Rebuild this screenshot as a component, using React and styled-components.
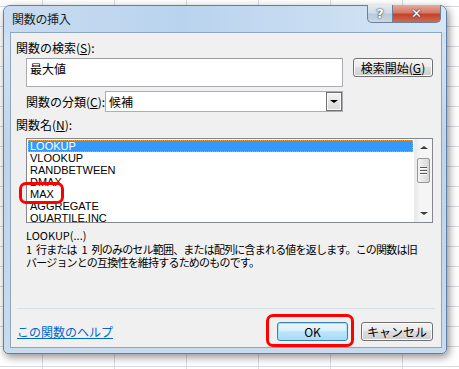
import React from 'react';
import styled, { createGlobalStyle } from 'styled-components';

const GlobalStyle = createGlobalStyle`
  html, body {
    margin: 0;
    padding: 0;
    width: 459px;
    height: 369px;
    overflow: hidden;
    background-color: #ffffff;
    background-image:
      linear-gradient(to right, #d6d9de 1px, transparent 1px),
      linear-gradient(to bottom, #d6d9de 1px, transparent 1px);
    background-size: 72px 20px;
    background-position: 42px 0, 0 6px;
    font-family: "Noto Sans CJK JP", "Liberation Sans", sans-serif;
  }
`;

const Window = styled.div`
  position: relative;
  width: 444px;
  height: 349px;
  margin: 5px 0 0 3px;
  box-sizing: border-box;
  border: 1px solid #5f7fa6;
  border-radius: 7px 7px 5px 5px;
  background: linear-gradient(to bottom, #c3d8ee 0%, #d3e3f4 12%, #bfd4ea 40%, #c8dbef 100%);
  box-shadow: 2px 3px 9px rgba(0, 0, 0, 0.45);
  display: flex;
  flex-direction: column;
`;

const TitleBar = styled.div`
  height: 26px;
  display: flex;
  align-items: flex-start;
  background: linear-gradient(to right, #c9dcf0 0%, #b9d3ee 40%, #d7e6f5 100%);
  border-radius: 6px 6px 0 0;
`;

const Title = styled.div`
  flex: 1;
  padding: 5px 0 0 8px;
  font-size: 12px;
  line-height: 15px;
  letter-spacing: -0.3px;
  color: #1b1b1b;
`;

const Caption = styled.div`
  display: flex;
  margin: -1px 5px 0 0;
`;

const CaptionButton = styled.div`
  width: ${(p) => p.w}px;
  height: 18px;
  box-sizing: border-box;
  border: 1px solid #6b7f97;
  border-top: none;
  display: flex;
  align-items: center;
  justify-content: center;
  font-family: "DejaVu Sans", sans-serif;
  font-weight: bold;
  font-size: 13px;
  color: #ffffff;
  background: ${(p) => (p.close
    ? 'linear-gradient(to bottom, #e8a99d 0%, #d57966 45%, #c3442d 55%, #d06a52 100%)'
    : 'linear-gradient(to bottom, #e4ebf3 0%, #cfdbe8 45%, #b9c9dc 55%, #cbd8e6 100%)')};
  border-radius: ${(p) => (p.close ? '0 0 5px 0' : '0 0 0 5px')};
  border-left: ${(p) => (p.close ? 'none' : '1px solid #6b7f97')};
  text-shadow: 0 0 2px #2c3b4f, 0 0 1px #2c3b4f;
`;

const Content = styled.div`
  flex: 1;
  margin: 0 4px 5px 6px;
  background: #f0f0f0;
  border: 1px solid #8fa6bf;
  display: flex;
  flex-direction: column;
  font-size: 12px;
  color: #000;
`;

const Label = styled.div`
  margin: ${(p) => p.mt}px 0 0 ${(p) => p.ml}px;
  line-height: 16px;
  font-size: 12px;
  white-space: nowrap;
`;

const Row = styled.div`
  display: flex;
  align-items: ${(p) => p.align || 'flex-start'};
  margin-top: ${(p) => p.mt}px;
  padding-left: 15px;
`;

const TextBox = styled.div`
  width: 317px;
  height: 29px;
  box-sizing: border-box;
  border: 1px solid #abadb3;
  border-top-color: #9a9ca3;
  background: #fff;
  padding: 2px 3px;
  font-size: 12px;
  line-height: 16px;
`;

const Button = styled.div`
  width: ${(p) => p.w}px;
  height: ${(p) => p.h || 19}px;
  margin-left: ${(p) => p.ml || 0}px;
  box-sizing: border-box;
  border: 1px solid ${(p) => (p.primary ? '#3c7fb1' : '#707070')};
  border-radius: 3px;
  background: ${(p) => (p.primary
    ? 'linear-gradient(to bottom, #eaf6fd 0%, #d9f0fc 50%, #bee6fd 50%, #a7d9f5 100%)'
    : 'linear-gradient(to bottom, #f2f2f2 0%, #ebebeb 50%, #dddddd 50%, #cfcfcf 100%)')};
  box-shadow: inset 0 0 0 1px ${(p) => (p.primary ? '#9fe4fb' : '#fcfcfc')};
  display: flex;
  align-items: center;
  justify-content: center;
  font-size: 12px;
  line-height: 14px;
  white-space: nowrap;
`;

const CategoryLabel = styled.div`
  width: 79px;
  line-height: 21px;
  white-space: nowrap;
`;

const Select = styled.div`
  width: 238px;
  height: 21px;
  box-sizing: border-box;
  border: 1px solid #abadb3;
  background: #fff;
  display: flex;
  align-items: center;
  justify-content: space-between;
  padding-left: 3px;
`;

const DropButton = styled.div`
  width: 16px;
  height: 19px;
  box-sizing: border-box;
  border: 1px solid #707070;
  background: linear-gradient(to bottom, #f4f4f4 0%, #e6e6e6 50%, #d9d9d9 100%);
  box-shadow: inset 0 0 0 1px #fbfbfb;
  display: flex;
  align-items: center;
  justify-content: center;
`;

const Triangle = styled.div`
  width: 0;
  height: 0;
  border-left: ${(p) => p.s}px solid transparent;
  border-right: ${(p) => p.s}px solid transparent;
  ${(p) => (p.up
    ? `border-bottom: ${p.s - 1}px solid ${p.color};`
    : `border-top: ${p.s - 1}px solid ${p.color};`)}
`;

const ListBox = styled.div`
  position: relative;
  width: 407px;
  height: 85px;
  margin: 5px 0 0 15px;
  box-sizing: border-box;
  border: 1px solid #828790;
  background: #fff;
  display: flex;
`;

const Rows = styled.div`
  flex: 1;
  padding: 1px;
  overflow: hidden;
`;

const Item = styled.div`
  height: 12px;
  box-sizing: border-box;
  padding-left: 2px;
  font-family: "Liberation Sans", Arial, sans-serif;
  font-size: 11px;
  line-height: 12px;
  color: ${(p) => (p.selected ? '#fff' : '#000')};
  background: ${(p) => (p.selected ? '#3399ff' : 'transparent')};
  outline: ${(p) => (p.selected ? '1px dotted #f0a030' : 'none')};
  outline-offset: -1px;
  white-space: nowrap;
`;

const ScrollBar = styled.div`
  width: 17px;
  background: linear-gradient(to right, #e9e9e9 0%, #f5f5f5 30%, #f5f5f5 100%);
  border-left: 1px solid #ececec;
  display: flex;
  flex-direction: column;
  align-items: center;
`;

const ArrowCell = styled.div`
  height: 17px;
  width: 100%;
  display: flex;
  align-items: center;
  justify-content: center;
`;

const Track = styled.div`
  flex: 1;
`;

const Thumb = styled.div`
  width: 13px;
  height: 25px;
  margin-top: 2px;
  box-sizing: border-box;
  border: 1px solid #979797;
  border-radius: 2px;
  background: linear-gradient(to right, #f3f3f3 0%, #e6e6e6 50%, #d6d6d6 100%);
  display: flex;
  flex-direction: column;
  align-items: center;
  justify-content: center;
  gap: 2px;
`;

const Grip = styled.div`
  width: 7px;
  height: 1px;
  background: #555;
  box-shadow: 0 1px 0 #fff;
`;

const Mark = styled.div`
  position: absolute;
  left: ${(p) => p.x}px;
  top: ${(p) => p.y}px;
  width: ${(p) => p.w}px;
  height: ${(p) => p.h}px;
  box-sizing: border-box;
  border: 3px solid #ff0000;
  border-radius: 7px;
  pointer-events: none;
`;

const Signature = styled.div`
  margin: 5px 0 0 15px;
  font-size: 11px;
  line-height: 14px;
`;

const Description = styled.div`
  margin: 1px 0 0 15px;
  font-size: 11px;
  line-height: 13px;
  letter-spacing: -0.8px;
  white-space: nowrap;
`;

const Separator = styled.div`
  height: 1px;
  margin: 39px 6px 0 6px;
  background: #d5dfe8;
`;

const Footer = styled.div`
  display: flex;
  align-items: center;
  margin-top: 13px;
  padding: 0 8px 0 6px;
`;

const HelpLink = styled.a`
  flex: 1;
  color: #0066cc;
  text-decoration: underline;
  font-size: 12px;
  line-height: 16px;
  cursor: pointer;
`;

const OkWrap = styled.div`
  position: relative;
`;

const functions = ['LOOKUP', 'VLOOKUP', 'RANDBETWEEN', 'DMAX', 'MAX', 'AGGREGATE', 'QUARTILE.INC'];

export default function App() {
  return (
    <>
      <GlobalStyle />
      <Window>
        <TitleBar>
          <Title>関数の挿入</Title>
          <Caption>
            <CaptionButton w={26}>?</CaptionButton>
            <CaptionButton w={48} close>✕</CaptionButton>
          </Caption>
        </TitleBar>
        <Content>
          <Label mt={7} ml={5}>関数の検索(<u>S</u>):</Label>
          <Row mt={2}>
            <TextBox>最大値</TextBox>
            <Button w={80} ml={10}>検索開始(<u>G</u>)</Button>
          </Row>
          <Row mt={4} align="center">
            <CategoryLabel>関数の分類(<u>C</u>):</CategoryLabel>
            <Select>
              <span>候補</span>
              <DropButton>
                <Triangle s={4} color="#000" />
              </DropButton>
            </Select>
          </Row>
          <Label mt={5} ml={5}>関数名(<u>N</u>):</Label>
          <ListBox>
            <Rows>
              {functions.map((f, i) => (
                <Item key={f} selected={i === 0}>{f}</Item>
              ))}
            </Rows>
            <ScrollBar>
              <ArrowCell>
                <Triangle s={4} up color="#3b3b3b" />
              </ArrowCell>
              <Thumb>
                <Grip />
                <Grip />
                <Grip />
              </Thumb>
              <Track />
              <ArrowCell>
                <Triangle s={4} color="#3b3b3b" />
              </ArrowCell>
            </ScrollBar>
            <Mark x={-8} y={43} w={45} h={22} />
          </ListBox>
          <Signature>LOOKUP(...)</Signature>
          <Description>
            1{'\u2002'}行または{'\u2002'}1{'\u2002'}列のみのセル範囲、または配列に含まれる値を返します。この関数は旧
            <br />
            バージョンとの互換性を維持するためのものです。
          </Description>
          <Separator />
          <Footer>
            <HelpLink>この関数のヘルプ</HelpLink>
            <OkWrap>
              <Button w={71} primary>OK</Button>
              <Mark x={-11} y={-8} w={88} h={33} />
            </OkWrap>
            <Button w={72} ml={13}>キャンセル</Button>
          </Footer>
        </Content>
      </Window>
    </>
  );
}
